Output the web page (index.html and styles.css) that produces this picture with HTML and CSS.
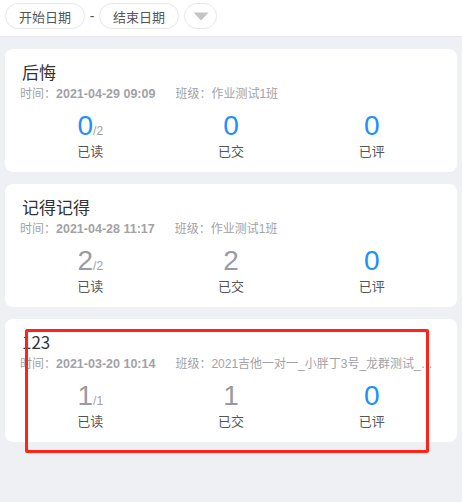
FILE: index.html
```html
<!DOCTYPE html>
<html lang="zh">
<head>
<meta charset="utf-8">
<link rel="stylesheet" href="styles.css">
</head>
<body>
<header class="filter">
  <div class="pill">开始日期</div>
  <span class="dash">-</span>
  <div class="pill">结束日期</div>
  <div class="pill drop"><svg width="16" height="9" viewBox="0 0 16 9"><path d="M0.5 0.5 H15.5 L8 8.5 Z" fill="#c4c4c4"/></svg></div>
</header>
<main class="list">
  <section class="card">
    <div class="title">后悔</div>
    <div class="meta"><span class="time">时间：<b>2021-04-29 09:09</b></span><span class="cls">班级：作业测试1班</span></div>
    <div class="stats">
      <div class="stat"><div class="num blue">0<small>/2</small></div><div class="label">已读</div></div>
      <div class="stat"><div class="num blue">0</div><div class="label">已交</div></div>
      <div class="stat"><div class="num blue">0</div><div class="label">已评</div></div>
    </div>
  </section>
  <section class="card">
    <div class="title">记得记得</div>
    <div class="meta"><span class="time">时间：<b>2021-04-28 11:17</b></span><span class="cls">班级：作业测试1班</span></div>
    <div class="stats">
      <div class="stat"><div class="num gray">2<small>/2</small></div><div class="label">已读</div></div>
      <div class="stat"><div class="num gray">2</div><div class="label">已交</div></div>
      <div class="stat"><div class="num blue">0</div><div class="label">已评</div></div>
    </div>
  </section>
  <section class="card">
    <div class="title">123</div>
    <div class="meta"><span class="time">时间：<b>2021-03-20 10:14</b></span><span class="cls">班级：2021吉他一对一_小胖丁3号_龙群测试_小胖丁3号</span></div>
    <div class="stats">
      <div class="stat"><div class="num gray">1<small>/1</small></div><div class="label">已读</div></div>
      <div class="stat"><div class="num gray">1</div><div class="label">已交</div></div>
      <div class="stat"><div class="num blue">0</div><div class="label">已评</div></div>
    </div>
  </section>
</main>
<div class="mark"></div>
</body>
</html>
```

FILE: styles.css
```css
html, body {
  margin: 0;
  padding: 0;
}
body {
  background: #eff0f4;
  font-family: "Liberation Sans", "Noto Sans CJK SC", sans-serif;
  min-height: 502px;
  position: relative;
}
.filter {
  height: 37px;
  background: #fff;
  border-bottom: 1px solid #e6e8ee;
  display: flex;
  align-items: flex-start;
  padding: 3px 0 0 5px;
  box-sizing: border-box;
}
.pill {
  height: 26px;
  box-sizing: border-box;
  border: 1px solid #e8e8ea;
  border-radius: 13px;
  padding: 0 13px;
  display: flex;
  align-items: center;
  font-size: 13px;
  color: #555;
  font-family: "Noto Sans CJK SC", sans-serif;
}
.dash {
  font-size: 14px;
  color: #555;
  width: 14px;
  text-align: center;
  line-height: 26px;
}
.drop {
  width: 33px;
  padding: 0;
  justify-content: center;
  margin-left: 5px;
}
.list {
  padding: 12px 5px;
  display: flex;
  flex-direction: column;
  gap: 12px;
}
.card {
  background: #fff;
  border-radius: 8px;
  padding: 12px 15px 12px 15px;
  height: 123px;
  box-sizing: border-box;
}
.title {
  font-size: 17px;
  line-height: 22px;
  color: #333;
  padding-left: 2px;
  font-family: "Noto Sans CJK SC", sans-serif;
}
.meta {
  display: flex;
  font-size: 12px;
  line-height: 22px;
  color: #a2a2a6;
  white-space: nowrap;
  padding-right: 5px;
}
.time {
  margin-right: 20px;
  flex: none;
}
.time b {
  font-family: "Liberation Sans", sans-serif;
  font-weight: bold;
  font-size: 12.5px;
}
.cls {
  overflow: hidden;
  text-overflow: ellipsis;
  min-width: 0;
}
.stats {
  display: flex;
  margin-top: 5px;
}
.stat {
  flex: 1;
  text-align: center;
}
.num {
  font-size: 28px;
  line-height: 32px;
  height: 32px;
}
.num small {
  font-size: 12px;
  line-height: 0;
  color: #a0a0a6;
}
.blue { color: #1e8fff; }
.gray { color: #9a9aa2; }
.label {
  font-size: 13px;
  line-height: 18px;
  color: #555;
  font-family: "Noto Sans CJK SC", sans-serif;
}
.mark {
  position: absolute;
  left: 25px;
  top: 329px;
  width: 404px;
  height: 124px;
  box-sizing: border-box;
  border: 3px solid #ff2419;
  border-radius: 2px;
}
```
